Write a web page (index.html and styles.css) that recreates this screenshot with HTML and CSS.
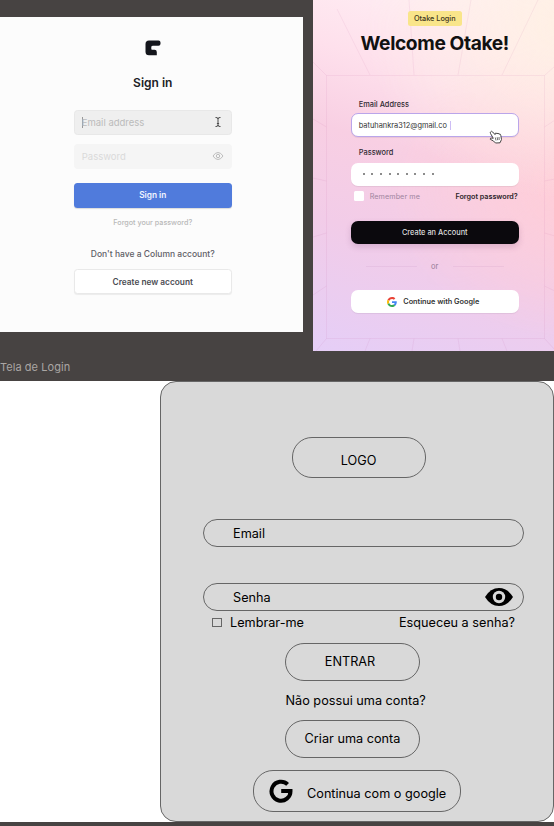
FILE: index.html
```html
<!DOCTYPE html>
<html lang="pt-BR">
<head>
<meta charset="utf-8">
<title>Tela de Login</title>
<link rel="stylesheet" href="styles.css">
</head>
<body>
<header class="references">
  <section class="column-card">
    <svg class="column-logo" viewBox="0 0 16 16"><path d="M4 .5H13.500Q15.5.5 15.5 2.500V3.700Q15.500 5.700 13.500 5.700H8Q6.300 5.700 6.300 7V9Q6.300 9.700 7 9.700H9.500Q11.800 9.700 11.800 12V15.200H4Q.5 15.200.5 11.700V4Q.5.5 4 .5Z" fill="#14161c"/></svg>
    <h1 class="column-title">Sign in</h1>
    <div class="column-field focused"><i class="caret"></i><span class="column-hint">Email address</span>
      <svg class="ibeam" viewBox="0 0 8 12"><path d="M1.500 1.500Q4 1.200 4 3Q4 1.200 6.500 1.500M4 2.500V9.500M1.500 10.500Q4 10.800 4 9Q4 10.800 6.500 10.500M2.900 7.500H5.100" fill="none" stroke="#4b4b4b"/></svg>
    </div>
    <div class="column-field"><span class="column-hint">Password</span>
      <svg class="small-eye" viewBox="0 0 12 10"><path d="M1 5Q3.200 1.500 6 1.500T11 5Q8.800 8.500 6 8.500T1 5Z" fill="none" stroke="#bdbdbd"/><circle cx="6" cy="5" r="1.700" fill="none" stroke="#bdbdbd"/></svg>
    </div>
    <div class="column-button primary">Sign in</div>
    <p class="column-forgot">Forgot your password?</p>
    <p class="column-question">Don't have a Column account?</p>
    <div class="column-button secondary">Create new account</div>
  </section>

  <section class="otake-card">
    <svg class="rays" viewBox="0 0 242 351"><g fill="none" stroke="#b85d9e" stroke-opacity=".09"><path d="M13.500 75.500H231.500V338.500H13.500ZM13.500 75.500L0 62M24 9L57 75M96 0L101 75M158 0L145 75M225 0L189 75M231.500 75.500L242 66M0 119L13.500 127M0 178L13.500 181M0 237L13.500 233M0 295L13.500 286M242 120L231.500 127M242 179L231.500 181M242 236L231.500 233M242 291L231.500 286M13.500 338.500L3 351M57 338.500L52 351M101 338.500L99 351M145 338.500L147 351M189 338.500L194 351M231.500 338.500L242 350"/></g></svg>
    <div class="otake-badge">Otake Login</div>
    <h2 class="otake-title">Welcome Otake!</h2>
    <div class="otake-form">
      <p class="otake-label">Email Address</p>
      <div class="otake-field active"><span class="otake-email">batuhankra312@gmail.co</span><i class="purple-caret"></i>
        <svg class="hand" viewBox="0 0 14 14"><path d="M1.500 2Q2.300.5 3.700 2L6 4.600L6.100 3.500Q7 2.400 8 3.700Q9 2.600 10 4Q11.500 3.500 11.800 5.500L12.500 9.500L11 12.800L6.500 13L4.500 11L1.300 9.300Q1 7.800 2.800 8.100L4.300 8.300L1.500 3.500Q1 2.700 1.500 2Z" fill="#fff" stroke="#333" stroke-width=".9"/><path d="M6.300 7.500L7 10.500M8.200 7.200L8.700 10.200M10 7L10.200 10" stroke="#333" stroke-width=".7"/></svg>
      </div>
      <p class="otake-label second">Password</p>
      <div class="otake-field"><span class="dots"><i></i><i></i><i></i><i></i><i></i><i></i><i></i><i></i><i></i></span></div>
      <div class="otake-options"><i class="otake-check"></i><span class="otake-remember">Remember me</span><span class="otake-forgot">Forgot password?</span></div>
      <div class="otake-submit">Create an Account</div>
      <div class="otake-divider"><i></i><span>or</span><i></i></div>
      <div class="otake-google">
        <svg class="google-color" viewBox="0 0 48 48"><path fill="#e94335" d="M24 9.500c3.540 0 6.710 1.220 9.210 3.600l6.850-6.850C35.900 2.380 30.470 0 24 0 14.620 0 6.510 5.380 2.560 13.220l7.980 6.190C12.430 13.720 17.740 9.500 24 9.500z"/><path fill="#4285f4" d="M46.980 24.550c0-1.570-.15-3.090-.38-4.550H24v9.020h12.940c-.58 2.960-2.260 5.480-4.780 7.180l7.730 6c4.510-4.180 7.090-10.360 7.090-17.650z"/><path fill="#fbbc05" d="M10.530 28.590A14.500 14.500 0 0 1 9.770 24c0-1.600.27-3.140.76-4.590l-7.980-6.190A23.900 23.900 0 0 0 0 24c0 3.880.92 7.540 2.560 10.780l7.970-6.190z"/><path fill="#34a853" d="M24 48c6.480 0 11.930-2.130 15.890-5.810l-7.730-6c-2.150 1.450-4.920 2.300-8.160 2.300-6.260 0-11.570-4.220-13.470-9.910l-7.980 6.190C6.510 42.620 14.620 48 24 48z"/></svg>
        <span>Continue with Google</span>
      </div>
    </div>
  </section>
  <p class="frame-name">Tela de Login</p>
</header>

<main class="canvas">
  <section class="login">
    <div class="pill logo"><span>LOGO</span></div>
    <div class="pill input email"><span>Email</span></div>
    <div class="pill input"><span>Senha</span>
      <svg class="big-eye" viewBox="0 0 28 18"><path d="M0 9Q5.500 0 14 0T28 9Q22.500 18 14 18T0 9Z"/><circle cx="14" cy="9" r="6.200" fill="#d9d9d9"/><circle cx="14" cy="9" r="3.200"/></svg>
    </div>
    <div class="options"><i class="check"></i><span class="remember">Lembrar-me</span><span class="forgot">Esqueceu a senha?</span></div>
    <div class="pill enter"><span>ENTRAR</span></div>
    <p class="question">Não possui uma conta?</p>
    <div class="pill create"><span>Criar uma conta</span></div>
    <div class="pill google">
      <svg class="google-black" viewBox="0 0 24 24"><path d="M18.600 5.400A9.500 9.500 0 1 0 21.500 12.100H12.200" fill="none" stroke="#000" stroke-width="4"/></svg>
      <span>Continua com o google</span>
    </div>
  </section>
</main>
</body>
</html>
```
FILE: styles.css
```css
* { box-sizing: border-box; }
body { margin: 0; width: 554px; height: 826px; overflow: hidden; background: #474342; font-family: Inter, sans-serif; }
h1, h2, p { margin: 0; }
svg { display: block; flex: none; }
span, p, h1, h2 { white-space: nowrap; }
.references { display: grid; grid-template-columns: 302.5px 241.5px; grid-template-rows: 350.5px 30.5px; column-gap: 10px; height: 381px; }

.column-card { margin-top: 17px; height: 315px; padding: 22.5px 71px 0 74px; background: #fcfcfc; display: flex; flex-direction: column; align-items: center; }
.column-logo { width: 16px; height: 16px; }
.column-title { margin-top: 19px; font-size: 12px; line-height: 16px; font-weight: 600; color: #202126; }
.column-field { position: relative; width: 158px; height: 25px; flex: none; margin-top: 9px; padding: 0 7px; display: flex; align-items: center; border: 1px solid #f5f5f5; border-radius: 3.500px; background: #f5f5f5; color: #dadada; font-size: 9.5px; }
.column-field.focused { margin-top: 19px; background: #efefef; border-color: #e8e8e8; color: #bbb; }
.caret { width: 1px; height: 11px; background: #999; margin-right: -1px; }
.ibeam { width: 8px; height: 12px; margin: 0 2px 0 auto; }
.small-eye { width: 12px; height: 10px; margin: 0 -.5px 0 auto; }
.column-button { width: 158px; height: 25px; flex: none; display: flex; align-items: center; justify-content: center; border-radius: 3.500px; font-size: 8.300px; font-weight: 600; }
.primary { margin-top: 14px; background: #507bdc; color: #f0f5ff; box-shadow: 0 1px 1px #0002; }
.column-forgot { margin-top: 9px; line-height: 12px; font-size: 7.200px; font-weight: 500; color: #b8b8b8; }
.column-question { margin-top: 19px; line-height: 12px; font-size: 8.500px; font-weight: 500; color: #5f6067; }
.secondary { margin-top: 9.5px; background: #fff; border: 1px solid #e9e9e9; color: #4b4c52; box-shadow: 0 1px 1px #0001; }

.otake-card { position: relative; height: 350.5px; padding-top: 11px; display: flex; flex-direction: column; align-items: center; overflow: hidden; background: radial-gradient(ellipse 200px 170px at 105% 8%, #fff0e4, #fff0e400), radial-gradient(ellipse 190px 150px at 110% 54%, #ffced8, #ffced800), linear-gradient(197deg, #fff3f6 0%, #fee0ec 27%, #f8cfe3 46%, #f2cce8 68%, #e5cef7 100%); }
.rays { position: absolute; inset: 0; width: 242px; height: 351px; }
.otake-badge { position: relative; margin-left: 3px; width: 54px; height: 15px; border-radius: 2.500px; background: #f9e58a; display: flex; align-items: center; justify-content: center; font-size: 7.300px; font-weight: 500; color: #3c3520; }
.otake-title { position: relative; margin-top: 5px; margin-left: 3px; font-size: 19.2px; line-height: 24px; font-weight: 700; letter-spacing: -.38px; color: #111; }
.otake-form { position: relative; width: 168px; margin: 43px 0 0 3px; }
.otake-label { padding-left: 8px; font-size: 7.400px; line-height: 13px; font-weight: 500; color: #302a33; }
.otake-label.second { margin-top: 9px; }
.otake-field { margin-top: 3.500px; height: 23px; border-radius: 7px; background: #fff; padding-left: 8px; display: flex; align-items: center; font-size: 7.400px; color: #333; box-shadow: 0 1px 1px #0001; }
.otake-field.active { margin-top: 2px; height: 24px; border: 1px solid #baa5ea; padding-left: 7px; }
.purple-caret { width: 1px; height: 9px; margin-left: 3px; background: #cdbdf5; }
.hand { position: absolute; left: 138px; top: 32px; width: 14px; height: 14px; }
.dots { display: flex; gap: 6.600px; padding-left: 4px; }
.dots i { width: 2px; height: 2px; border-radius: 1px; background: #666; }
.otake-options { display: flex; align-items: center; height: 12px; margin-top: 4.500px; padding-left: 3px; font-size: 7.200px; }
.otake-check { width: 10px; height: 10px; background: #fff; border-radius: 1.500px; }
.otake-remember { margin-left: 6px; color: #a0859f; letter-spacing: .08px; }
.otake-forgot { margin-left: auto; margin-right: 1px; font-weight: 600; color: #2c1e29; }
.otake-submit { height: 23px; margin-top: 18.5px; border-radius: 7px; background: #0b090d; color: #ddd; display: flex; align-items: center; justify-content: center; font-size: 7.400px; font-weight: 500; box-shadow: 0 3px 6px #60306030; }
.otake-divider { display: flex; align-items: center; justify-content: space-between; margin: 17px 15px 0; height: 12px; color: #967c96; font-size: 7.500px; }
.otake-divider i { width: 51px; height: 1px; background: #9b609b18; }
.otake-google { height: 23px; margin-top: 17.500px; border-radius: 7px; background: #fff; display: flex; align-items: center; justify-content: center; gap: 6px; padding-right: 3px; font-size: 7.300px; font-weight: 600; color: #333; box-shadow: 0 1px 1px #0001; }
.google-color { width: 10px; height: 10px; }
.frame-name { padding-top: 7px; font-size: 11px; line-height: 18px; color: #aaa6a4; letter-spacing: .05px; }

.canvas { height: 441px; background: #fff; display: flex; justify-content: flex-end; }
.login { width: 394px; height: 441px; padding-top: 55px; background: #d9d9d9; border: 1px solid #666; border-radius: 16px; display: flex; flex-direction: column; font-size: 12.7px; color: #000; }
.pill { border: 1px solid #666; border-radius: 20px; display: flex; align-items: center; justify-content: center; flex: none; }
.logo { width: 134px; height: 41px; margin-left: 131px; padding: 5px 1px 0 0; }
.input { width: 321px; height: 28px; margin: 36px 0 0 42px; padding: 0 10px 0 29px; justify-content: flex-start; }
.email { margin-top: 41px; }
.big-eye { width: 28px; height: 18px; margin-left: auto; }
.options { display: flex; align-items: center; height: 18px; margin: 2px 38px 0 51px; }
.check { width: 10px; height: 9px; border: 1px solid #666; }
.remember { margin-left: 8px; }
.forgot { margin-left: auto; }
.enter, .create { width: 135px; height: 38px; margin-left: 124px; }
.enter { margin-top: 12px; padding: 0 5px 2px 0; }
.question { margin: 11px 0 0 124.5px; line-height: 18px; }
.create { margin-top: 10px; padding: 0 0 2px; }
.google { width: 208px; height: 42px; margin: 12px 0 0 92px; justify-content: flex-start; padding-left: 15px; }
.google-black { width: 24px; height: 24px; }
.google span { margin-left: 14px; padding-top: 4px; }
```
